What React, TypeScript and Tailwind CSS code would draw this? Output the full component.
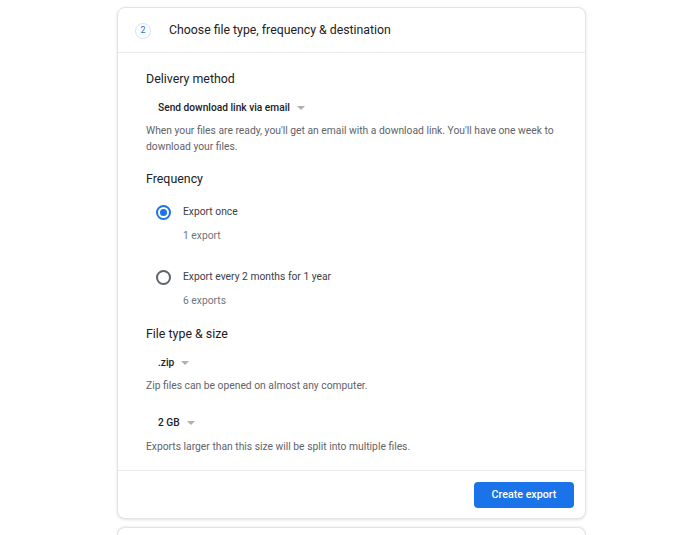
import React from "react";

const Caret: React.FC = () => (
  <span className="ml-[7px] inline-block h-0 w-0 border-x-[4px] border-t-[4px] border-x-transparent border-t-[#b0b0b0]" />
);

const Dropdown: React.FC<{ label: string }> = ({ label }) => (
  <div className="flex items-center pl-[12px] text-[10.2px] leading-[16px] font-medium text-[#202124]">
    {label}
    <Caret />
  </div>
);

const Radio: React.FC<{ checked?: boolean; label: string; sub: string }> = ({ checked, label, sub }) => (
  <div className="pl-[10px]">
    <div className="flex h-[16px] items-center">
      <span
        className={
          checked
            ? "flex h-[15px] w-[15px] items-center justify-center rounded-full border-2 border-[#1a73e8]"
            : "flex h-[15px] w-[15px] items-center justify-center rounded-full border-2 border-[#5f6368]"
        }
      >
        {checked && <span className="h-[7px] w-[7px] rounded-full bg-[#1a73e8]" />}
      </span>
      <span className="ml-[12px] text-[10.3px] leading-[16px] text-[#3c4043]">{label}</span>
    </div>
    <div className="mt-[8px] pl-[27px] text-[10.3px] leading-[16px] text-[#70757a]">{sub}</div>
  </div>
);

export default function App() {
  return (
    <div className="min-h-[535px] bg-white pt-[7px] font-['Roboto',sans-serif]">
      <div className="ml-[117px] w-[469px] rounded-[8px] border border-[#e3e3e3] bg-white shadow-[0_1px_3px_rgba(60,64,67,0.15)]">
        {/* header */}
        <div className="flex h-[45px] items-center border-b border-[#e8eaed] pl-[17px] pt-[1px]">
          <span className="flex h-[16px] w-[16px] items-center justify-center rounded-full border border-[#d2e3fc] text-[9px] text-[#1a73e8]">
            2
          </span>
          <span className="ml-[18px] text-[12.3px] text-[#202124]">Choose file type, frequency &amp; destination</span>
        </div>

        {/* body */}
        <div className="pl-[28px] pr-[22px] pt-[16px] pb-[15px]">
          <div className="text-[12.4px] leading-[20px] text-[#202124]">Delivery method</div>
          <div className="mt-[11px]">
            <Dropdown label="Send download link via email" />
          </div>
          <p className="mt-[7px] text-[10.3px] leading-[16px] text-[#5f6368]">
            When your files are ready, you'll get an email with a download link. You'll have one week to download your files.
          </p>

          <div className="mt-[14px] text-[12.4px] leading-[20px] text-[#202124]">Frequency</div>
          <div className="mt-[15px] flex flex-col gap-[25px]">
            <Radio checked label="Export once" sub="1 export" />
            <Radio label="Export every 2 months for 1 year" sub="6 exports" />
          </div>

          <div className="mt-[15px] text-[12.4px] leading-[20px] text-[#202124]">File type &amp; size</div>
          <div className="mt-[11px]">
            <Dropdown label=".zip" />
          </div>
          <p className="mt-[7px] text-[10.3px] leading-[16px] text-[#5f6368]">Zip files can be opened on almost any computer.</p>
          <div className="mt-[21px]">
            <Dropdown label="2 GB" />
          </div>
          <p className="mt-[8px] text-[10.3px] leading-[16px] text-[#5f6368]">Exports larger than this size will be split into multiple files.</p>
        </div>

        {/* footer */}
        <div className="flex justify-end border-t border-[#e8eaed] pt-[11px] pb-[10px] pr-[11px]">
          <button className="h-[26px] w-[100px] rounded-[4px] bg-[#1a73e8] text-[10.7px] font-medium text-white">Create export</button>
        </div>
      </div>
      <div className="mt-[8px] ml-[117px] h-[20px] w-[469px] rounded-t-[8px] border border-b-0 border-[#e3e3e3] bg-white shadow-[0_-1px_2px_rgba(60,64,67,0.08)]" />
    </div>
  );
}
